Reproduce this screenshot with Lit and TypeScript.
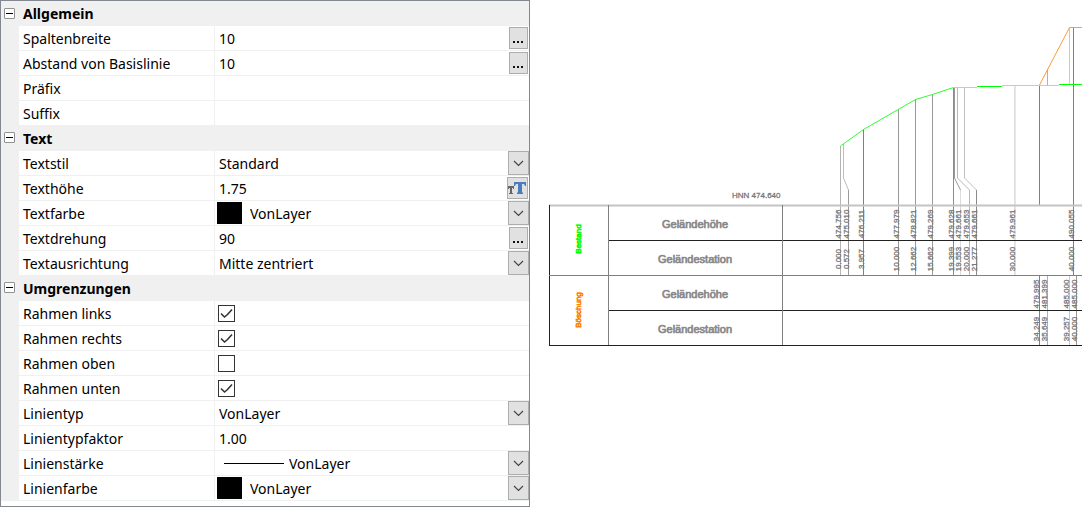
import { LitElement, html, svg, css, nothing } from "lit";
import { customElement, property, state } from "lit/decorators.js";

type Kind = "text" | "select" | "color" | "line" | "check";
interface Row {
  id: string;
  label: string;
  kind: Kind;
  value?: string;
  checked?: boolean;
  action?: "more" | "size";
}
interface Group {
  title: string;
  rows: Row[];
}

const GROUPS: Group[] = [
  {
    title: "Allgemein",
    rows: [
      { id: "spaltenbreite", label: "Spaltenbreite", kind: "text", value: "10", action: "more" },
      { id: "abstand", label: "Abstand von Basislinie", kind: "text", value: "10", action: "more" },
      { id: "praefix", label: "Präfix", kind: "text", value: "" },
      { id: "suffix", label: "Suffix", kind: "text", value: "" },
    ],
  },
  {
    title: "Text",
    rows: [
      { id: "textstil", label: "Textstil", kind: "select", value: "Standard" },
      { id: "texthoehe", label: "Texthöhe", kind: "text", value: "1.75", action: "size" },
      { id: "textfarbe", label: "Textfarbe", kind: "color", value: "VonLayer" },
      { id: "textdrehung", label: "Textdrehung", kind: "text", value: "90", action: "more" },
      { id: "textausrichtung", label: "Textausrichtung", kind: "select", value: "Mitte zentriert" },
    ],
  },
  {
    title: "Umgrenzungen",
    rows: [
      { id: "links", label: "Rahmen links", kind: "check", checked: true },
      { id: "rechts", label: "Rahmen rechts", kind: "check", checked: true },
      { id: "oben", label: "Rahmen oben", kind: "check", checked: false },
      { id: "unten", label: "Rahmen unten", kind: "check", checked: true },
      { id: "linientyp", label: "Linientyp", kind: "select", value: "VonLayer" },
      { id: "faktor", label: "Linientypfaktor", kind: "text", value: "1.00" },
      { id: "staerke", label: "Linienstärke", kind: "line", value: "VonLayer" },
      { id: "linienfarbe", label: "Linienfarbe", kind: "color", value: "VonLayer" },
    ],
  },
];

@customElement("property-row")
class PropertyRow extends LitElement {
  @property({ attribute: false }) row!: Row;

  static styles = css`
    :host {
      display: grid;
      grid-template-columns: 196px 1fr;
      height: 24px;
      margin-left: 18px;
      border-top: 1px solid #f0f0f0;
      background: #fff;
    }
    .label {
      padding-left: 4px;
      border-right: 1px solid #f0f0f0;
      line-height: 26px;
      height: 24px;
      white-space: nowrap;
    }
    .value {
      display: flex;
      align-items: center;
      min-width: 0;
      padding-right: 1px;
    }
    .field,
    .select {
      box-sizing: border-box;
      font: inherit;
      color: inherit;
      border: 0;
      outline: 0;
      margin: 0;
      padding: 0 0 0 4px;
      background: transparent;
      flex: 1;
      min-width: 0;
      height: 24px;
      border-radius: 0;
    }
    .combo {
      flex: 1;
      display: grid;
      grid-template-columns: 1fr 22px;
      align-items: center;
      min-width: 0;
      margin-right: -1px;
    }
    .select {
      appearance: none;
      grid-area: 1 / 1 / 2 / 3;
      padding-top: 2px;
    }
    .arrow {
      grid-area: 1 / 2 / 2 / 3;
      box-sizing: border-box;
      width: 21px;
      height: 24px;
      justify-self: end;
      display: grid;
      place-items: center;
      background: #e1e1e1;
      border: 1px solid #adadad;
      pointer-events: none;
    }
    .swatch {
      width: 25px;
      height: 22px;
      margin: 0 4px 0 2px;
      background: #000;
    }
    .stroke {
      width: 60px;
      height: 1px;
      margin: 0 1px 0 9px;
      background: #000;
    }
    .button {
      box-sizing: border-box;
      width: 19px;
      height: 22px;
      padding: 0;
      display: grid;
      place-items: center;
      background: #e1e1e1;
      border: 1px solid #adadad;
    }
    .button.wide {
      width: 21px;
    }
    .check {
      appearance: none;
      grid-area: 1 / 1;
      box-sizing: border-box;
      width: 17px;
      height: 17px;
      margin: 0;
      border: 1px solid #333;
      background: #fff;
    }
    .tick {
      display: grid;
      place-items: center;
      margin-left: 3px;
    }
    .tick svg {
      grid-area: 1 / 1;
      pointer-events: none;
    }
    svg {
      display: block;
    }
  `;

  private action(kind: "more" | "size") {
    return kind === "more"
      ? html`<button class="button" aria-label="${this.row.label} wählen">
          <svg width="17" height="20" viewBox="0 0 17 20" fill="#111">
            <path d="M3 13h2v2H3zM7 13h2v2H7zM11 13h2v2h-2z" />
          </svg>
        </button>`
      : html`<button class="button wide" aria-label="${this.row.label} wählen">
          <svg width="19" height="20" viewBox="0 0 19 20">
            <path d="M0 8h6v3H5V10H4v5h1v1H1v-1h1v-5H1v1H0z" fill="#666" />
            <path d="M6 4h12v4h-1l-1-2h-2v8l1 1v1H9v-1l1-1V6H8L7 8H6z" fill="#4a7ebb" />
          </svg>
        </button>`;
  }

  private editor() {
    const r = this.row;
    if (r.kind === "check") {
      return html`<span class="tick">
        <input
          class="check"
          type="checkbox"
          id=${r.id}
          .checked=${!!r.checked}
          @change=${(e: Event) => {
            this.row = { ...r, checked: (e.target as HTMLInputElement).checked };
          }}
        />
        ${r.checked
          ? html`<svg width="17" height="17" viewBox="0 0 17 17">
              <path d="M3 8.500l3.500 3.500 3-2.500 4.500-5" fill="none" stroke="#333" stroke-width="1.600" />
            </svg>`
          : nothing}
      </span>`;
    }
    if (r.kind === "text") {
      return html`<input class="field" type="text" id=${r.id} .value=${r.value ?? ""} />
        ${r.action ? this.action(r.action) : nothing}`;
    }
    return html`${r.kind === "color" ? html`<span class="swatch"></span>` : nothing}
      ${r.kind === "line" ? html`<span class="stroke"></span>` : nothing}
      <span class="combo">
        <select class="select" id=${r.id}>
          <option>${r.value}</option>
        </select>
        <span class="arrow">
          <svg width="11" height="7" viewBox="0 0 11 7">
            <path d="M1 1l4.500 4.500L10 1" fill="none" stroke="#444" stroke-width="1.200" />
          </svg>
        </span>
      </span>`;
  }

  render() {
    return html`<label class="label" for=${this.row.id}>${this.row.label}</label>
      <div class="value">${this.editor()}</div>`;
  }
}

@customElement("property-group")
class PropertyGroup extends LitElement {
  @property({ attribute: false }) group!: Group;
  @state() private open = true;

  static styles = css`
    :host {
      display: block;
    }
    .head {
      box-sizing: border-box;
      display: flex;
      align-items: center;
      gap: 8px;
      height: 25px;
      padding-left: 3px;
      background: #f0f0f0;
    }
    :host([first]) .head {
      height: 24px;
    }
    .toggle {
      width: 11px;
      height: 11px;
      box-sizing: border-box;
      padding: 0;
      display: grid;
      place-items: center;
      border: 1px solid #919191;
      border-radius: 1px;
      background: #fff;
    }
    .toggle svg {
      display: block;
    }
    .title {
      margin: 0;
      padding-top: 2px;
      font-size: inherit;
      font-weight: 700;
    }
  `;

  render() {
    return html`<div class="head">
        <button
          class="toggle"
          aria-label=${this.group.title}
          aria-expanded=${this.open}
          @click=${() => (this.open = !this.open)}
        >
          <svg width="9" height="9" viewBox="0 0 9 9">
            <path d=${this.open ? "M1 4h7v1H1z" : "M1 4h7v1H1zM4 1h1v7H4z"} fill="#000" />
          </svg>
        </button>
        <h2 class="title">${this.group.title}</h2>
      </div>
      ${this.open
        ? this.group.rows.map((r) => html`<property-row .row=${r}></property-row>`)
        : nothing}`;
  }
}

type Mark = [x: number, value: string];

const BESTAND_HOEHE: Mark[] = [
  [841, "474.756"], [849, "475.010"], [864, "476.211"], [899, "477.979"],
  [916, "478.821"], [933, "479.269"], [954, "479.628"], [961, "479.661"],
  [969, "479.653"], [977, "479.661"], [1015, "479.961"], [1074, "490.055"],
];
const BESTAND_STATION: Mark[] = [
  [841, "0.000"], [849, "0.572"], [864, "3.957"], [899, "10.000"],
  [916, "12.662"], [933, "15.662"], [954, "19.399"], [961, "19.553"],
  [969, "20.000"], [977, "21.277"], [1015, "30.000"], [1074, "40.000"],
];
const BOESCHUNG_HOEHE: Mark[] = [
  [1039, "479.995"], [1047, "481.399"], [1069, "485.000"], [1077, "485.000"],
];
const BOESCHUNG_STATION: Mark[] = [
  [1039, "34.249"], [1047, "35.649"], [1069, "39.257"], [1077, "40.000"],
];

// Station lines: path, grey tone
const LINES: [string, string][] = [
  ["M840.5 146V275", "#b4b4b4"],
  ["M843.5 144V178L848.5 190", "#bdbdbd"],
  ["M848.5 190V275", "#9a9a9a"],
  ["M863.5 129V275", "#808080"],
  ["M898.5 109V275", "#999"],
  ["M915.5 99V275", "#999"],
  ["M932.5 94V275", "#999"],
  ["M953.5 87V275", "#8c8c8c"],
  ["M954.5 87V178L960.5 190", "#999"],
  ["M960.5 190V275", "#dcdcdc"],
  ["M957.5 87V178L969.5 190V275", "#b8b8b8"],
  ["M964.5 87V178L976.5 190", "#c0c0c0"],
  ["M976.5 190V275", "#8c8c8c"],
  ["M1014.5 86V275", "#e0e0e0"],
  ["M1015.5 86V275", "#e6e6e6"],
  ["M1039.5 85V205M1039.500 276V345", "#808080"],
  ["M1047.5 69V85M1047.500 276V345", "#b0b0b0"],
  ["M1069.5 28V84M1069.500 276V345", "#c8c8c8"],
  ["M1073.5 28V275", "#808080"],
  ["M1076.5 276V345", "#999"],
];

@customElement("profile-drawing")
class ProfileDrawing extends LitElement {
  static styles = css`
    :host {
      display: block;
      min-width: 0;
      overflow: hidden;
    }
    .canvas {
      display: block;
      width: 100%;
      height: 100%;
      font-family: "Liberation Sans", Arial, sans-serif;
      font-size: 8px;
    }
    .note,
    .mid {
      fill: #777;
      stroke: #777;
      stroke-width: 0.3;
    }
    .mid {
      text-anchor: middle;
    }
    .name {
      font-size: 11px;
      fill: #888;
      stroke: #888;
      stroke-width: 0.7;
      text-anchor: middle;
    }
    .group {
      stroke-width: 0.6;
      text-anchor: middle;
    }
    .green {
      fill: #00ff00;
      stroke: #00ff00;
    }
    .orange {
      fill: #ff7f00;
      stroke: #ff7f00;
    }
  `;

  private marks(list: Mark[], y: number) {
    return list.map(
      ([x, v]) => svg`<text class="mid" transform="translate(${x} ${y}) rotate(-90)">${v}</text>`
    );
  }

  render() {
    return html`<svg class="canvas" viewBox="530 0 552 507" preserveAspectRatio="xMinYMin slice" role="img" aria-label="Geländeprofil">
      <g fill="none" stroke-width="1">
        ${LINES.map(([d, c]) => svg`<path d=${d} stroke=${c} />`)}
        <path d="M840.500 146L863.500 129.500L915.500 99.500L932.500 94.500L953.500 87.500" stroke="#2eff2e" />
        <path d="M953 87.500H977M1002 85.500H1059" stroke="#7dff7d" />
        <path d="M977 86.500H1002M1059 84.500H1400" stroke="#00ff00" />
        <path d="M1039.500 85L1069.500 27.500H1400" stroke="#ff9a35" />
      </g>
      <g fill="none">
        <path d="M549 205.500H1400" stroke="#c4c4c4" stroke-width="2" />
        <path d="M608 240.500H1400M608 310.500H1400M549 345.500H1400M549.500 205V346" stroke="#222" />
        <path d="M549 275.500H1400M608.500 205V345M782.500 205V345" stroke="#808080" />
      </g>
      <text class="note" x="732" y="198">HNN 474.640</text>
      <text class="name" x="695" y="228">Geländehöhe</text>
      <text class="name" x="695" y="263">Geländestation</text>
      <text class="name" x="695" y="298">Geländehöhe</text>
      <text class="name" x="695" y="333">Geländestation</text>
      <text class="group green" transform="translate(581 239) rotate(-90)">Bestand</text>
      <text class="group orange" transform="translate(581 310) rotate(-90)">Böschung</text>
      ${this.marks(BESTAND_HOEHE, 224)}
      ${this.marks(BESTAND_STATION, 259)}
      ${this.marks(BOESCHUNG_HOEHE, 294)}
      ${this.marks(BOESCHUNG_STATION, 329)}
    </svg>`;
  }
}

@customElement("app-root")
class AppRoot extends LitElement {
  static styles = css`
    :host {
      display: grid;
      grid-template-columns: minmax(400px, 49%) 1fr;
      background: #fff;
      color: #000;
      font: 14px/20px "Noto Sans", "Open Sans", sans-serif;
    }
    .panel {
      border: 1px solid #828790;
      background: #fff;
    }
    .list {
      background: #f0f0f0;
      border-bottom: 1px solid #f0f0f0;
      margin-bottom: 5px;
    }
  `;

  render() {
    return html`<section class="panel" aria-label="Eigenschaften">
        <div class="list">
          ${GROUPS.map((g, i) => html`<property-group .group=${g} ?first=${i === 0}></property-group>`)}
        </div>
      </section>
      <profile-drawing></profile-drawing>`;
  }
}
